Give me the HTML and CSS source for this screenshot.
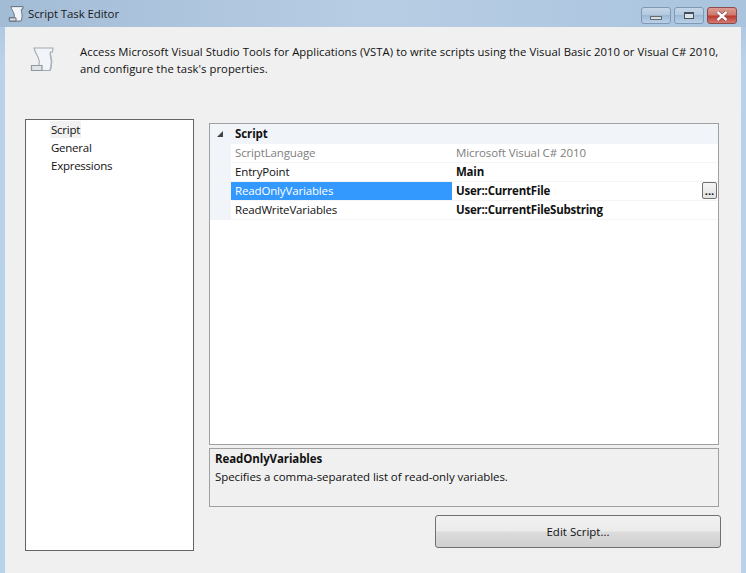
FILE: index.html
```html
<!DOCTYPE html>
<html lang="en">
<head>
<meta charset="utf-8">
<title>Script Task Editor</title>
<link rel="stylesheet" href="styles.css">
</head>
<body>
<div class="window">
  <header class="titlebar">
    <svg class="title-icon" viewBox="0 0 24 25" aria-hidden="true">
      <path d="M4 1H23L22.500 5H20.500C19.500 8 22 12 21.500 16C21 19 21 22 20 23.500H2L1.500 18.500H9C10 15 9 12 8 10C7 8 5 5 4 1Z" fill="#f2f5f9" stroke="#5a6672" stroke-width="1.400"/>
      <path d="M1.500 18.500H12V23.500H1.500Z" fill="#d3dbe3" stroke="#5a6672" stroke-width="1.400"/>
    </svg>
    <span class="title-text">Script Task Editor</span>
    <div class="controls">
      <div class="ctl"><span class="glyph-min"></span></div>
      <div class="ctl"><span class="glyph-max"></span></div>
      <div class="ctl ctl-close">
        <svg class="glyph-x" viewBox="0 0 14 10" aria-hidden="true">
          <path d="M2.500 1L11.500 9M11.500 1L2.500 9" stroke="#6e3a3a" stroke-width="3.600" fill="none"/>
          <path d="M2.500 1L11.500 9M11.500 1L2.500 9" stroke="#fff" stroke-width="2.400" fill="none"/>
        </svg>
      </div>
    </div>
  </header>
  <main class="client">
    <section class="intro">
      <svg class="intro-icon" viewBox="0 0 24 25" aria-hidden="true">
        <path d="M4 1H23L22.500 5H20.500C19.500 8 22 12 21.500 16C21 19 21 22 20 23.500H2L1.500 18.500H9C10 15 9 12 8 10C7 8 5 5 4 1Z" fill="#f1f4f8" stroke="#a2aab2" stroke-width="1.100"/>
        <path d="M1.500 18.500H12V23.500H1.500Z" fill="#dfe4e9" stroke="#8f989f" stroke-width="1.200"/>
        <path d="M20.500 5C19.500 8 22 12 21.500 16C21 19 21 22 20 23.500" fill="none" stroke="#aeb6bd" stroke-width="1.600"/>
      </svg>
      <p class="intro-text">Access Microsoft Visual Studio Tools for Applications (VSTA) to write scripts using the Visual Basic 2010 or Visual C# 2010, and configure the task's properties.</p>
    </section>
    <section class="body">
      <nav class="nav">
        <div class="nav-item nav-active"><span>Script</span></div>
        <div class="nav-item"><span>General</span></div>
        <div class="nav-item"><span>Expressions</span></div>
      </nav>
      <div class="right">
        <div class="grid">
          <div class="cat">
            <span class="gutter"><span class="caret"></span></span>
            <span class="cat-name">Script</span>
          </div>
          <div class="row">
            <span class="gutter gutter-light"></span>
            <span class="name muted">ScriptLanguage</span>
            <span class="value muted">Microsoft Visual C# 2010</span>
          </div>
          <div class="row">
            <span class="gutter gutter-light"></span>
            <span class="name">EntryPoint</span>
            <span class="value strong">Main</span>
          </div>
          <div class="row">
            <span class="gutter gutter-light"></span>
            <span class="name selected">ReadOnlyVariables</span>
            <span class="value strong">User::CurrentFile</span>
            <span class="ellipsis">...</span>
          </div>
          <div class="row">
            <span class="gutter gutter-light"></span>
            <span class="name">ReadWriteVariables</span>
            <span class="value strong">User::CurrentFileSubstring</span>
          </div>
        </div>
        <div class="help">
          <div class="help-title">ReadOnlyVariables</div>
          <div class="help-text">Specifies a comma-separated list of read-only variables.</div>
        </div>
        <div class="actions">
          <button class="edit" type="button">Edit Script...</button>
        </div>
      </div>
    </section>
  </main>
</div>
</body>
</html>
```
FILE: styles.css
```css
* { box-sizing: border-box; }
html, body { margin: 0; height: 100%; }
body {
  font-family: "Open Sans", "Noto Sans", sans-serif;
  font-size: 11.5px;
  color: #111;
  overflow: hidden;
}
.window {
  width: 746px;
  height: 573px;
  display: flex;
  flex-direction: column;
  padding: 0 5px;
  background: linear-gradient(#a9c3de 0, #b9d1ea 60px, #b8d2ec 100%);
}
.titlebar {
  height: 27px;
  flex: none;
  display: flex;
  align-items: center;
  margin: 0 -5px;
  padding: 0 9px 0 8px;
  background: linear-gradient(90deg, #a3bcd6 0, #b7cde4 50%, #aac4de 100%);
}
.title-icon { width: 16px; height: 16px; flex: none; }
.title-text { margin-left: 4px; letter-spacing: -0.1px; color: #1a1a1a; }
.controls { margin-left: auto; display: flex; gap: 3px; align-self: flex-start; margin-top: 7px; }
.ctl {
  width: 30px;
  height: 17px;
  border: 1px solid #7f98b4;
  border-radius: 3px;
  display: flex;
  align-items: center;
  justify-content: center;
  background: linear-gradient(#c5d6e8 0, #b4c9df 45%, #9fb9d4 50%, #b9d0e7 100%);
}
.ctl-close {
  border-color: #8e4a48;
  background: linear-gradient(#dc9c92 0, #d07a6e 45%, #bc3a30 55%, #d27a70 100%);
}
.glyph-min { width: 12px; height: 4px; margin-top: 4px; background: #d8dde2; border: 1px solid #626c76; }
.glyph-max { width: 10px; height: 7px; background: #dbe3ea; border: 1px solid #444e58; border-top-width: 2px; }
.glyph-x { width: 14px; height: 10px; }
.client {
  flex: 1;
  min-height: 0;
  background: #f0f0f0;
  display: flex;
  flex-direction: column;
  padding: 0 20px;
}
.intro {
  height: 92px;
  flex: none;
  display: flex;
  margin: 0 -20px;
  padding: 16px 10px 0 25px;
}
.intro-icon { width: 24px; height: 25px; flex: none; margin-top: 4px; }
.intro-text { margin: 0 0 0 26px; line-height: 17px; width: 645px; font-size: 11.3px; letter-spacing: 0.04px; }
.body { display: flex; gap: 15px; flex: none; }
.nav {
  width: 169px;
  height: 432px;
  flex: none;
  background: #fff;
  border: 1px solid #646464;
  padding: 1px 0 0 25px;
  letter-spacing: -0.25px;
}
.nav-item { height: 18px; line-height: 17px; }
.nav-item span { display: inline-block; }
.nav-active span { background: #f1f1f1; padding: 0 1px; margin-left: -1px; }
.right { width: 512px; padding-top: 4px; }
.grid {
  width: 510px;
  height: 322px;
  background: #fff;
  border: 1px solid #a0a0a0;
}
.cat {
  height: 20px;
  background: #f1f5fa;
  display: flex;
  align-items: center;
  line-height: 18px;
}
.gutter { width: 21px; flex: none; display: flex; align-items: center; justify-content: center; align-self: stretch; }
.gutter-light { background: #f1f5fa; }
.caret {
  width: 0; height: 0;
  margin-left: -2px;
  border-left: 6px solid transparent;
  border-bottom: 6px solid #444;
}
.cat-name { margin-left: 4px; margin-top: -1px; font-weight: 700; letter-spacing: -0.1px; }
.row {
  height: 19px;
  display: flex;
  align-items: stretch;
  border-bottom: 1px solid #f4f4f4;
  line-height: 18px;
  position: relative;
}
.name { width: 221px; flex: none; padding-left: 4px; letter-spacing: -0.15px; }
.selected { background: #3399ff; color: #fff; }
.value { padding-left: 4px; }
.value.muted { letter-spacing: -0.1px; }
.muted { color: #808080; }
.strong { font-weight: 700; letter-spacing: -0.22px; }
.ellipsis {
  position: absolute;
  right: 1px;
  top: 0;
  width: 15px;
  height: 17px;
  border: 1px solid #707070;
  border-radius: 2px;
  background: linear-gradient(#f4f4f4, #e2e2e2);
  text-align: center;
  line-height: 15px;
  font-size: 11px;
  font-weight: 700;
}
.help {
  width: 510px;
  height: 59px;
  margin-top: 3px;
  border: 1px solid #a0a0a0;
  padding: 1px 5px;
  line-height: 18px;
}
.help-title { font-weight: 700; letter-spacing: -0.1px; }
.help-text { letter-spacing: -0.08px; }
.actions { margin-top: 8px; display: flex; justify-content: flex-end; }
.edit {
  width: 286px;
  height: 33px;
  border: 1px solid #707070;
  border-radius: 3px;
  background: linear-gradient(#f2f2f2 0, #ebebeb 48%, #dcdcdc 52%, #cfcfcf 100%);
  font: inherit;
  color: #111;
  padding: 0;
}
```
